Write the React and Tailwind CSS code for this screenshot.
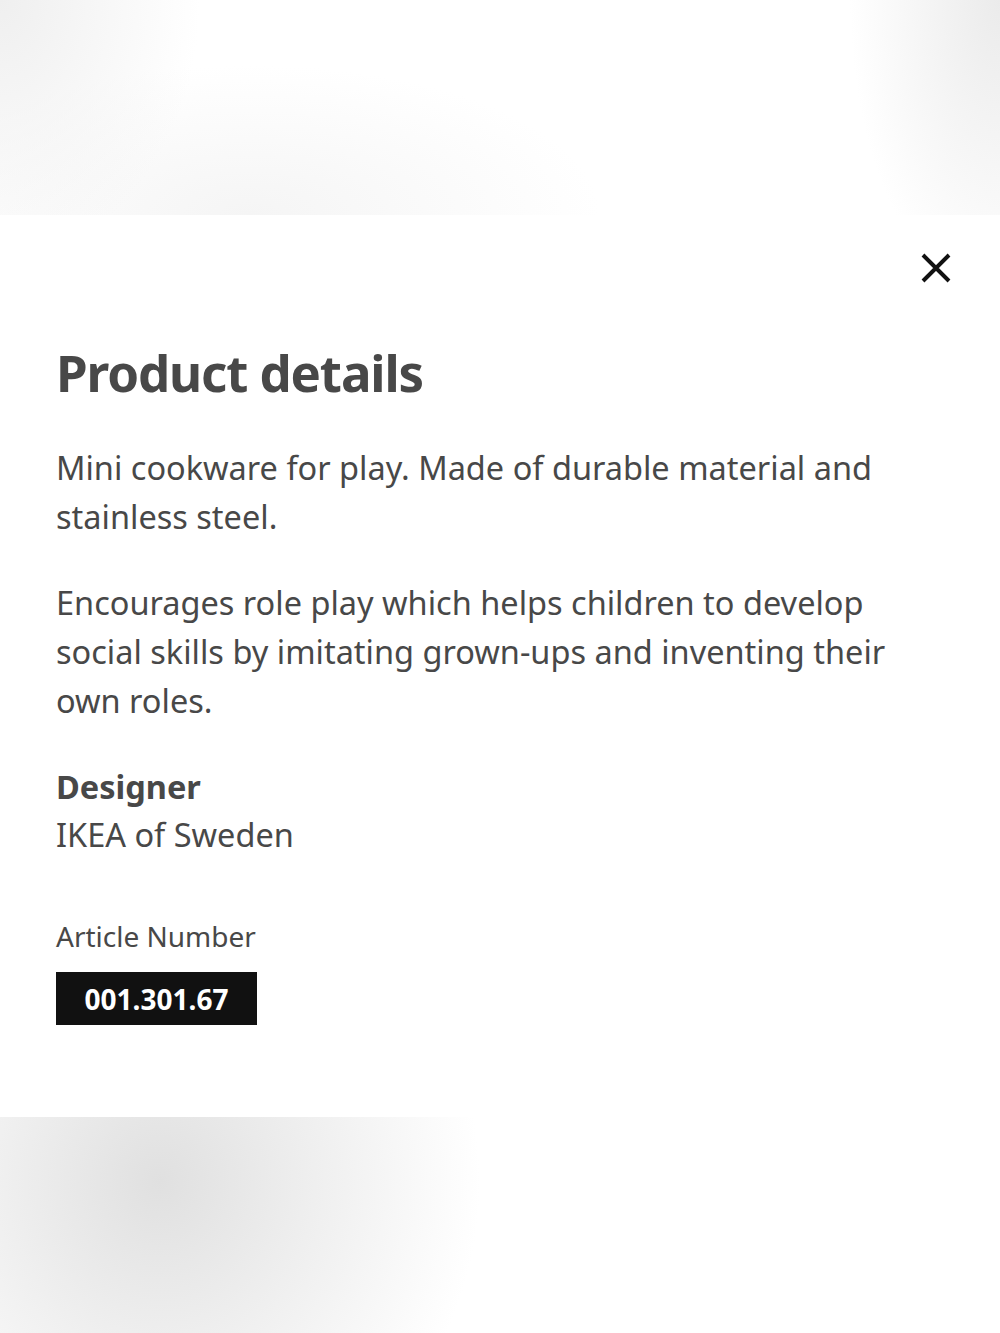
export default function App() {
  return (
    <div className="w-[1000px] h-[1333px] flex flex-col font-['Noto_Sans',sans-serif] text-[#484848] bg-white">
      <div className="h-[215px] bg-[radial-gradient(ellipse_200px_260px_at_0%_0%,#efefef,transparent),radial-gradient(ellipse_150px_300px_at_100%_0%,#ebebeb,transparent),radial-gradient(ellipse_350px_150px_at_25%_100%,#f5f5f5,transparent)]" />
      <div className="h-[902px] bg-white relative px-[56px] pt-[125px]">
        <button className="absolute right-[48px] top-[37px] w-[32px] h-[32px] flex items-center justify-center">
          <svg width="32" height="32" viewBox="0 0 32 32" fill="none" stroke="#111" strokeWidth="4">
            <path d="M3 3 L29 29 M29 3 L3 29" />
          </svg>
        </button>
        <h1 className="text-[51px] font-bold leading-[64px] tracking-[-0.022em] text-[#484848]">Product details</h1>
        <p className="mt-[39px] text-[32.5px] leading-[49px] pr-[44px]">Mini cookware for play. Made of durable material and stainless steel.</p>
        <p className="mt-[37px] text-[32.5px] leading-[49px] pr-[44px]">Encourages role play which helps children to develop social skills by imitating grown-ups and inventing their own roles.</p>
        <h2 className="mt-[38px] text-[32.5px] leading-[48px] font-bold">Designer</h2>
        <p className="text-[32.5px] leading-[48px]">IKEA of Sweden</p>
        <p className="mt-[57px] text-[28px] leading-[40px]">Article Number</p>
        <div className="mt-[16px] inline-flex items-center justify-center w-[201px] h-[53px] bg-[#111111] text-white text-[28px] font-bold">001.301.67</div>
      </div>
      <div className="h-[216px] bg-[radial-gradient(ellipse_320px_340px_at_16%_30%,#e0e0e0,transparent)]" />
    </div>
  );
}
